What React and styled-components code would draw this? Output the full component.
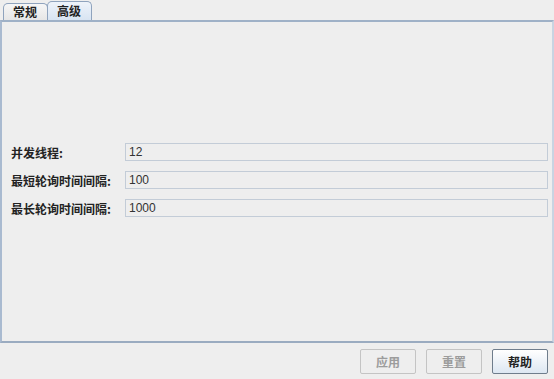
import React, { useState } from "react";
import styled, { createGlobalStyle } from "styled-components";

const GlobalStyle = createGlobalStyle`
  html, body {
    margin: 0;
    padding: 0;
    background: #eeeeee;
  }
  body {
    font-family: "Liberation Sans", "Noto Sans CJK SC", sans-serif;
    font-size: 12px;
    color: #333333;
  }
`;

const Window = styled.div`
  width: 554px;
  height: 379px;
  display: flex;
  flex-direction: column;
  background: #eeeeee;
  overflow: hidden;
`;

const TabBar = styled.div`
  display: flex;
  align-items: flex-end;
  height: 20px;
  padding-left: 3px;
`;

const Tab = styled.button`
  height: ${(p) => (p.active ? "19px" : "17px")};
  padding: 0 10px 0 9px;
  margin: 0;
  border: 1px solid #8fa3bd;
  border-bottom: none;
  border-radius: 5px 5px 0 0;
  background: ${(p) =>
    p.active
      ? "linear-gradient(#eef3fa, #d8e4f2)"
      : "linear-gradient(#f6f6f6, #e6e6e6)"};
  font-family: "Noto Sans CJK SC", sans-serif;
  font-weight: bold;
  font-size: 12px;
  line-height: 16px;
  color: #222222;
  cursor: pointer;
  margin-right: ${(p) => (p.active ? "0" : "-1px")};
`;

const Panel = styled.div`
  flex: 1;
  border-top: 2px solid #9fb1c7;
  border-left: 2px solid #a9bad0;
  border-right: 2px solid #c9d4e2;
  border-bottom: 2px solid #9aabc0;
  padding: 121px 4px 0 9px;
`;

const Form = styled.div`
  display: grid;
  grid-template-columns: 114px 423px;
  row-gap: 10px;
  align-items: center;
`;

const Label = styled.label`
  font-family: "Noto Sans CJK SC", sans-serif;
  font-weight: bold;
  font-size: 12px;
  color: #222222;
`;

const Field = styled.input`
  box-sizing: border-box;
  height: 18px;
  width: 100%;
  margin: 0;
  padding: 0 3px;
  border: 1px solid #c3ccd7;
  background: #eeeeee;
  font-family: "Liberation Sans", sans-serif;
  font-size: 12px;
  color: #333333;
  outline: none;
`;

const Footer = styled.div`
  height: 36px;
  display: flex;
  justify-content: flex-end;
  align-items: center;
  gap: 10px;
  padding-right: 6px;
`;

const Button = styled.button`
  box-sizing: border-box;
  width: 56px;
  height: 25px;
  margin: 0;
  padding: 0;
  border: 1px solid ${(p) => (p.disabled ? "#c4c4c4" : "#6f7d8c")};
  border-radius: 2px;
  background: ${(p) =>
    p.disabled ? "#eeeeee" : "linear-gradient(#ffffff, #dde7f2)"};
  font-family: "Noto Sans CJK SC", sans-serif;
  font-weight: bold;
  font-size: 12px;
  color: ${(p) => (p.disabled ? "#9c9c9c" : "#222222")};
  cursor: ${(p) => (p.disabled ? "default" : "pointer")};
`;

const fields = [
  { label: "并发线程:", value: "12" },
  { label: "最短轮询时间间隔:", value: "100" },
  { label: "最长轮询时间间隔:", value: "1000" },
];

export default function App() {
  const [tab, setTab] = useState("advanced");

  return (
    <Window>
      <GlobalStyle />
      <TabBar>
        <Tab active={tab === "general"} onClick={() => setTab("general")}>
          常规
        </Tab>
        <Tab active={tab === "advanced"} onClick={() => setTab("advanced")}>
          高级
        </Tab>
      </TabBar>
      <Panel>
        <Form>
          {fields.map((f) => (
            <React.Fragment key={f.label}>
              <Label>{f.label}</Label>
              <Field defaultValue={f.value} />
            </React.Fragment>
          ))}
        </Form>
      </Panel>
      <Footer>
        <Button disabled>应用</Button>
        <Button disabled>重置</Button>
        <Button>帮助</Button>
      </Footer>
    </Window>
  );
}
